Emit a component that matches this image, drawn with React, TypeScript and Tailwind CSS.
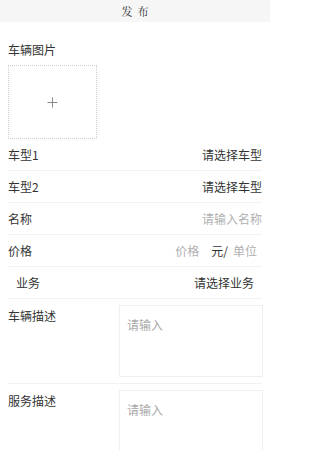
import React from 'react'

const font = '"Noto Sans CJK SC", "Noto Sans", sans-serif'

function Row({
  label,
  children,
  inset = false,
}: {
  label: string
  children: React.ReactNode
  inset?: boolean
}) {
  return (
    <div className="mx-2 h-[32px] border-b border-[#f2f2f2] flex items-center justify-between">
      <div className={`flex w-full items-center justify-between ${inset ? 'px-2' : ''}`}>
        <span className="text-[#333]">{label}</span>
        <div className="flex items-center">{children}</div>
      </div>
    </div>
  )
}

function AreaRow({ label, last = false }: { label: string; last?: boolean }) {
  return (
    <div
      className={`mx-2 flex items-start justify-between pt-[6px] pb-[6px] ${
        last ? '' : 'border-b border-[#f2f2f2]'
      }`}
    >
      <span className="mt-[2px] text-[#333]">{label}</span>
      <div className="mr-[-1px] h-[72px] w-[144px] border border-[#f0f0f0] px-[7px] pt-[10px] text-[#aaa]">
        请输入
      </div>
    </div>
  )
}

export default function App() {
  return (
    <div
      className="w-[270px] h-[450px] overflow-hidden bg-white text-[12px] leading-[18px]"
      style={{ fontFamily: font }}
    >
      {/* Header */}
      <div className="h-[22px] bg-[#f6f6f6] flex items-center justify-center">
        <span
          className="text-[11px] tracking-[5px] pl-[5px] text-[#333]"
          style={{ fontFamily: '"Noto Serif CJK SC", serif' }}
        >
          发布
        </span>
      </div>

      {/* Vehicle photos */}
      <div className="px-2 pt-[19px]">
        <div className="text-[#333]">车辆图片</div>
        <div className="mt-[6px] h-[74px] w-[89px] border border-dotted border-[#cfcfcf] flex items-center justify-center">
          <svg width="11" height="11" viewBox="0 0 11 11">
            <path d="M5.5 0.5v10M0.5 5.5h10" stroke="#8a8a8a" strokeWidth="1" />
          </svg>
        </div>
      </div>

      <div>
        <Row label="车型1">
          <span className="text-[#333]">请选择车型</span>
        </Row>
        <Row label="车型2">
          <span className="text-[#333]">请选择车型</span>
        </Row>
        <Row label="名称">
          <span className="text-[#b0b0b0]">请输入名称</span>
        </Row>
        <Row label="价格">
          <span className="text-[#b0b0b0]">价格</span>
          <span className="ml-[12px] text-[#333]">元/</span>
          <span className="ml-[5px] mr-[5px] text-[#b0b0b0]">单位</span>
        </Row>
        <Row label="业务" inset>
          <span className="text-[#333]">请选择业务</span>
        </Row>
        <AreaRow label="车辆描述" />
        <AreaRow label="服务描述" last />
      </div>
    </div>
  )
}
